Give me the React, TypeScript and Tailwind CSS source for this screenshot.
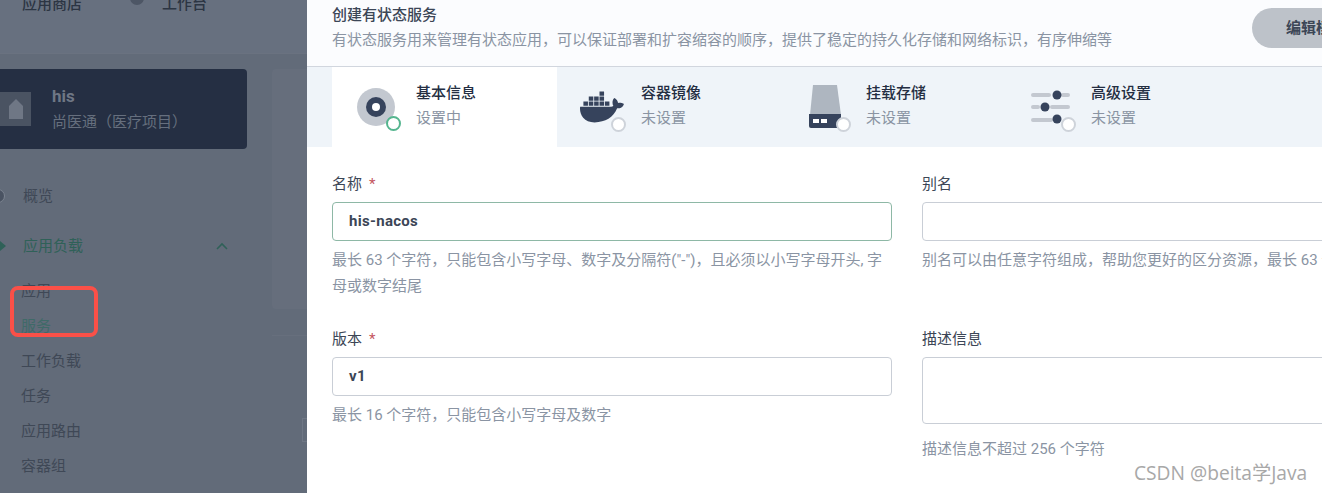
import React from 'react';
import { FaDocker } from 'react-icons/fa';

const font = "[font-family:Roboto,'Noto_Sans_CJK_SC',sans-serif]";

const sideItems = [
  { label: '应用', active: false },
  { label: '服务', active: true },
  { label: '工作负载', active: false },
  { label: '任务', active: false },
  { label: '应用路由', active: false },
  { label: '容器组', active: false },
];

const BasicIcon = () => (
  <svg width="40" height="40" viewBox="0 0 40 40">
    <circle cx="20" cy="20" r="19" fill="#c3c8d0" />
    <circle cx="20" cy="20" r="10" fill="#36435c" />
    <circle cx="20" cy="20" r="4" fill="#ffffff" />
  </svg>
);

const DiskIcon = () => (
  <svg width="36" height="44" viewBox="0 0 36 44">
    <path d="M5 0H29L33 30H2Z" fill="#aeb6c0" />
    <path d="M1 29H33V41Q33 43 31 43H3Q1 43 1 41Z" fill="#36435c" />
    <rect x="5" y="34" width="6" height="4" fill="#ffffff" />
    <rect x="13" y="34" width="6" height="4" fill="#ffffff" />
  </svg>
);

const SliderIcon = () => (
  <svg width="40" height="34" viewBox="0 0 40 34">
    <g stroke="#c3c8d0" strokeWidth="4" strokeLinecap="round">
      <path d="M2 5H18M32 5H37M2 17H7M21 17H37M2 30H20" />
    </g>
    <circle cx="26" cy="5" r="4.5" fill="#36435c" />
    <circle cx="14" cy="17" r="4.5" fill="#36435c" />
    <circle cx="26" cy="29" r="4.5" fill="#36435c" />
  </svg>
);

function Ring({ done, className }: { done?: boolean; className: string }) {
  return (
    <span
      className={`absolute w-[15px] h-[15px] rounded-full bg-white border-2 ${done ? 'border-[#55b58f]' : 'border-[#ced3da]'} ${className}`}
    />
  );
}

function StepTab({ title, status, active, children }: { title: string; status: string; active?: boolean; children: React.ReactNode }) {
  return (
    <div className={`w-[225px] shrink-0 h-full flex items-center pl-[24px] ${active ? 'bg-white' : ''}`}>
      <div className="w-[60px] h-[44px] flex items-center shrink-0">{children}</div>
      <div className="flex flex-col gap-[5px] pb-[3px]">
        <span className="text-[15px] leading-[20px] font-medium text-[#242e42]">{title}</span>
        <span className="text-[15px] leading-[20px] text-[#8a94a3]">{status}</span>
      </div>
    </div>
  );
}

function Field({ label, required, value, help, tall }: { label: string; required?: boolean; value?: string; help: string; tall?: boolean }) {
  return (
    <div className="flex flex-col">
      <div className="h-[20px] leading-[20px] text-[15px] text-[#3c4656] whitespace-nowrap">
        {label}
        {required && <span className="ml-[7px] text-[#c4555f]">*</span>}
      </div>
      {tall ? (
        <div className="mt-[8px] h-[67px] w-[560px] border border-[#c9ced6] rounded-[4px] bg-white" />
      ) : (
        <div className={`mt-[8px] h-[39px] w-[560px] border rounded-[4px] bg-white flex items-center px-[16px] text-[15px] tracking-[0.3px] font-bold text-[#3c4656] ${value === 'his-nacos' ? 'border-[#8eb8a6]' : 'border-[#c9ced6]'}`}>
          {value}
        </div>
      )}
      <p className={`${tall ? 'mt-[12px]' : 'mt-[6px]'} text-[15px] leading-[26px] text-[#8a94a3]`}>{help}</p>
    </div>
  );
}

export default function App() {
  return (
    <div className={`relative w-[1322px] h-[493px] overflow-hidden flex bg-white ${font}`}>
      {/* dimmed page behind the drawer */}
      <aside className="w-[307px] shrink-0 h-full bg-[#626b79] flex flex-col overflow-hidden">
        <div className="h-[60px] shrink-0 bg-[#67707f] border-b border-[#6a7280] -mt-[6px] flex items-start pl-[22px] text-[15px] font-medium text-[#2c3543]">
          <span className="leading-[20px]">应用商店</span>
          <span className="ml-[48px] mt-[-3px] w-[14px] h-[14px] rounded-full bg-[#4d5665]" />
          <span className="ml-[18px] leading-[20px]">工作台</span>
        </div>
        <div className="flex flex-1">
          <div className="w-[272px] shrink-0 flex flex-col">
            <div className="mt-[15px] w-[247px] h-[80px] bg-[#252f43] rounded-r-[4px] flex items-center shrink-0">
              <div className="w-[31px] h-[34px] ml-0 bg-[#4a5362] flex items-center justify-end pr-[8px]">
                <svg width="14" height="20" viewBox="0 0 14 20">
                  <path d="M0 7L7 0L14 7V20H0Z" fill="#6f7785" />
                </svg>
              </div>
              <div className="ml-[21px] flex flex-col">
                <span className="text-[17px] leading-[18px] font-bold text-[#6f7785]">his</span>
                <span className="mt-[7px] text-[15px] leading-[20px] text-[#666f7e]">尚医通（医疗项目）</span>
              </div>
            </div>
            <div className="mt-[37px] flex items-center h-[20px] text-[15px] text-[#3f4856]">
              <span className="w-[10px] h-[14px] -ml-[5px] mr-[18px] rounded-r-full bg-[#4a5362] border border-[#7c8491]" />
              概览
            </div>
            <div className="mt-[30px] flex items-center h-[20px] text-[15px] text-[#2f6158]">
              <span className="w-[6px] h-[10px] mr-[17px] bg-[#2f6158] [clip-path:polygon(0_0,100%_50%,0_100%)]" />
              应用负载
              <svg className="ml-auto mr-[44px]" width="12" height="8" viewBox="0 0 12 8" fill="none" stroke="#2f6158" strokeWidth="1.6">
                <path d="M1 7L6 2L11 7" />
              </svg>
            </div>
            <ul className="mt-[25px] pl-[21px] flex flex-col gap-[15px] text-[15px]">
              {sideItems.map((item) => (
                <li key={item.label} className={`h-[20px] leading-[20px] ${item.active ? 'text-[#3f6a68]' : 'text-[#3f4856]'}`}>
                  {item.label}
                </li>
              ))}
            </ul>
          </div>
          <div className="flex-1 flex flex-col">
            <div className="mt-[15px] h-[240px] bg-[#666e7c] rounded-l-[4px]" />
            <div className="mt-[26px] h-[1px] bg-[#676f7d]" />
            <div className="mt-[82px] ml-[30px] h-[24px] border border-[#6f7785] border-r-0" />
          </div>
        </div>
      </aside>

      {/* drawer */}
      <main className="flex-1 min-w-0 h-full flex flex-col bg-white">
        <header className="h-[67px] shrink-0 bg-[#fbfcfe] border-b border-[#d1d6de] flex pl-[25px] relative">
          <div className="pt-[5px]">
            <h2 className="text-[15px] leading-[20px] font-medium text-[#3c4656]">创建有状态服务</h2>
            <p className="mt-[5px] text-[15px] leading-[20px] text-[#8a94a3] whitespace-nowrap">
              有状态服务用来管理有状态应用，可以保证部署和扩容缩容的顺序，提供了稳定的持久化存储和网络标识，有序伸缩等
            </p>
          </div>
          <button className="absolute left-[945px] top-[8px] w-[120px] h-[40px] rounded-[20px] bg-[#bdc2c9] text-left pl-[34px] text-[15px] font-bold text-[#3c4656] whitespace-nowrap">
            编辑模板
          </button>
        </header>

        <div className="h-[80px] shrink-0 bg-[#eff4f9] flex pl-[25px]">
          <StepTab title="基本信息" status="设置中" active>
            <div className="relative">
              <BasicIcon />
              <Ring done className="right-[-5px] bottom-[-4px]" />
            </div>
          </StepTab>
          <StepTab title="容器镜像" status="未设置">
            <div className="relative -ml-[1px]">
              <FaDocker size={44} color="#36435c" />
              <Ring className="right-[-2px] bottom-[-3px]" />
            </div>
          </StepTab>
          <StepTab title="挂载存储" status="未设置">
            <div className="relative ml-[2px]">
              <DiskIcon />
              <Ring className="right-[-7px] bottom-[-3px]" />
            </div>
          </StepTab>
          <StepTab title="高级设置" status="未设置">
            <div className="relative">
              <SliderIcon />
              <Ring className="right-[-5px] bottom-[-8px]" />
            </div>
          </StepTab>
        </div>

        <div className="pt-[27px] pl-[25px] grid grid-cols-[560px_560px] gap-x-[30px] gap-y-[30px]">
          <Field
            label="名称"
            required
            value="his-nacos"
            help='最长 63 个字符，只能包含小写字母、数字及分隔符("-")，且必须以小写字母开头, 字母或数字结尾'
          />
          <Field label="别名" value="" help="别名可以由任意字符组成，帮助您更好的区分资源，最长 63 个字符" />
          <Field label="版本" required value="v1" help="最长 16 个字符，只能包含小写字母及数字" />
          <Field label="描述信息" tall help="描述信息不超过 256 个字符" />
        </div>
      </main>

      {/* annotation over the screenshot */}
      <div className="absolute left-[10px] top-[286px] w-[88px] h-[51px] border-[4px] border-[#fa5048] rounded-[8px]" />
      <div className="absolute left-[1134px] top-[460px] text-[19.2px] leading-[26px] text-[#a8a8a8] [font-family:'Open_Sans','Noto_Sans_CJK_SC',sans-serif]">
        CSDN @beita学Java
      </div>
    </div>
  );
}
